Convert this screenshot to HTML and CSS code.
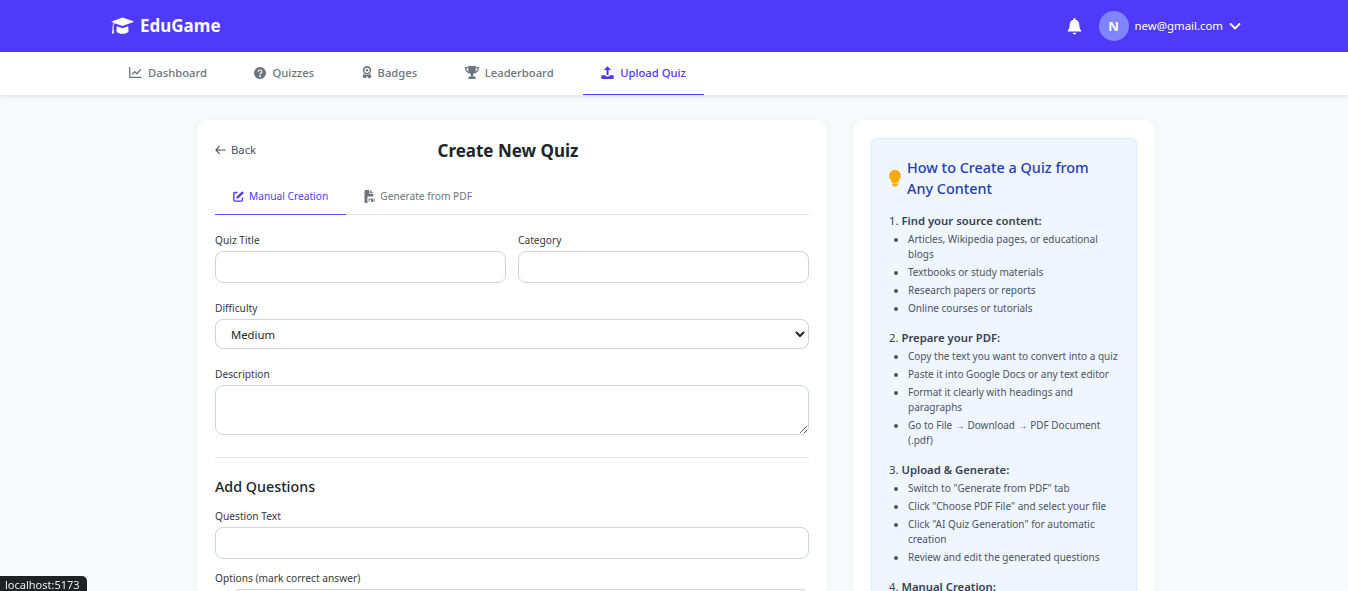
FILE: index.html
```html
<!DOCTYPE html>
<html lang="en">
<head>
    <meta charset="UTF-8">
    <meta name="viewport" content="width=device-width, initial-scale=1.0">
    <title>EduGame - Create New Quiz</title>
    <link rel="stylesheet" href="styles.css">
</head>
<body>
    <header class="topbar">
        <div class="logo">
            <svg class="logo-icon" viewBox="0 0 24 19"><path d="M12 .5.500 4.800c-.3.100-.3.500 0 .6l2.300.8C2 7.400 1.700 9 1.600 10.500c-.5.300-.5 1 0 1.300L.8 17.500h2.400l-.8-5.700c.5-.3.500-1 0-1.300.1-1.500.5-3 1.400-4l8.200 3 11.500-4.300c.3-.1.300-.5 0-.6z" fill="#fff"/><path d="M6 9.700 5.600 14.500c0 1.800 2.900 3.300 6.400 3.300s6.400-1.500 6.400-3.300L18 9.700l-6 2.200z" fill="#fff"/></svg>
            <span>EduGame</span>
        </div>
        <div class="user-area">
            <svg class="bell" viewBox="0 0 14 17"><path d="M7 0c-.6 0-1 .4-1 1v.7C3.700 2.100 2.200 4.100 2.200 6.400c0 3.400-.8 4.700-1.800 6-.4.500-.1 1.200.6 1.200h12c.7 0 1-.7.600-1.200-1-1.300-1.800-2.600-1.800-6 0-2.300-1.500-4.300-3.800-4.700V1c0-.6-.4-1-1-1zM5.200 14.700c0 .9.800 1.700 1.800 1.700s1.800-.8 1.800-1.700z" fill="#fff"/></svg>
            <div class="avatar">N</div>
            <span class="email">new@gmail.com</span>
            <svg class="chevron" viewBox="0 0 12 8"><path d="M1 1.500 6 6.500l5-5" fill="none" stroke="#fff" stroke-width="1.800"/></svg>
        </div>
    </header>

    <nav class="mainnav">
        <a class="nav-item" href="#">
            <svg class="nav-icon" viewBox="0 0 14 13"><path d="M.8.500v11.200h12.700" fill="none" stroke="currentColor" stroke-width="1.400"/><path d="M3.300 8.800 6.200 5.700l2.300 2.100 4.200-4.700" fill="none" stroke="currentColor" stroke-width="1.400"/></svg>
            Dashboard
        </a>
        <a class="nav-item" href="#">
            <svg class="nav-icon icon-q" viewBox="0 0 12 12"><circle cx="6" cy="6" r="6" fill="currentColor"/><path d="M4.100 4.800C4.100 3.600 5 3 6 3s1.900.6 1.900 1.700c0 1.400-1.900 1.300-1.900 2.700" fill="none" stroke="#fff" stroke-width="1.200"/><circle cx="6" cy="9.200" r=".9" fill="#fff"/></svg>
            Quizzes
        </a>
        <a class="nav-item" href="#">
            <svg class="nav-icon icon-b" viewBox="0 0 10 13"><circle cx="5" cy="4.300" r="3.400" fill="none" stroke="currentColor" stroke-width="1.600"/><circle cx="5" cy="4.300" r="1.200" fill="currentColor"/><path d="M1.500 7.800.6 11.300c-.1.300.2.500.4.400l1.200-.2.800 1c.2.200.5.100.6-.1L5 9.800l1.400 2.600c.1.200.4.300.6.100l.8-1 1.200.2c.2.100.5-.1.400-.4L8.500 7.800C7.600 8.600 6.300 9 5 9s-2.600-.4-3.500-1.200z" fill="currentColor"/></svg>
            Badges
        </a>
        <a class="nav-item" href="#">
            <svg class="nav-icon icon-t" viewBox="0 0 14 13"><path d="M3.200 0h7.600v4.300c0 2-1.200 3.500-2.700 4v2.200h1.700c.4 0 .7.300.7.700V13H3.500v-1.800c0-.4.300-.7.700-.7h1.700V8.300c-1.500-.5-2.700-2-2.700-4z" fill="currentColor"/><path d="M3.300 1.600H.7c0 2.600 1 4.400 3.400 5M10.700 1.600h2.600c0 2.600-1 4.400-3.400 5" fill="none" stroke="currentColor" stroke-width="1.300"/></svg>
            Leaderboard
        </a>
        <a class="nav-item active" href="#">
            <svg class="nav-icon" viewBox="0 0 13 13"><path d="M6.500.3 2.800 4h2.700v5h2V4h2.700z" fill="currentColor"/><path d="M.2 10.500c0-.8.500-1.300 1.300-1.300h2.700c.4.900 1.200 1.200 2.300 1.200s1.900-.3 2.300-1.200h2.700c.8 0 1.300.5 1.300 1.300v1.100c0 .8-.5 1.300-1.300 1.300h-10c-.8 0-1.300-.5-1.300-1.300z" fill="currentColor"/></svg>
            Upload Quiz
        </a>
    </nav>

    <main class="page">
        <section class="card quiz-card">
            <div class="card-head">
                <a class="back" href="#">
                    <svg class="back-icon" viewBox="0 0 12 10"><path d="M5 .8 1 5l4 4.200M1 5h10.500" fill="none" stroke="currentColor" stroke-width="1.200"/></svg>
                    Back
                </a>
                <h1>Create New Quiz</h1>
                <div class="head-spacer"></div>
            </div>

            <div class="tabs">
                <button class="tab active" type="button">
                    <svg class="tab-icon" viewBox="0 0 12 12"><path d="M10.300 7v2.900c0 .7-.5 1.200-1.200 1.200H2.100c-.7 0-1.200-.5-1.200-1.200V2.900c0-.7.500-1.200 1.200-1.200H5" fill="none" stroke="currentColor" stroke-width="1.500"/><path d="M10 .3 11.800 2.100 6 8 3.600 8.500 4.100 6.100z" fill="currentColor"/></svg>
                    Manual Creation
                </button>
                <button class="tab" type="button">
                    <svg class="tab-icon icon-pdf" viewBox="0 0 11 13"><path d="M.5 1.300C.5.600 1 0 1.700 0h3.600v3c0 .5.400 1 1 1h2.900v2.600H4.400c-.6 0-1 .4-1 1V13H1.700C1 13 .5 12.400.5 11.700z" fill="currentColor"/><path d="M6.100 0l3.100 3.200H6.100z" fill="currentColor"/><path d="M4.600 8.500h1.800v1.600H5.400V12h-.8zM7 8.500h1.200c.6 0 .9.500.9 1.700s-.3 1.800-.9 1.800H7zM9.600 8.500h1.400v.8h-.7v.7h.6v.7h-.6V12h-.7z" fill="currentColor"/></svg>
                    Generate from PDF
                </button>
            </div>

            <form class="quiz-form">
                <div class="form-row">
                    <div class="field">
                        <label>Quiz Title</label>
                        <input type="text">
                    </div>
                    <div class="field">
                        <label>Category</label>
                        <input type="text">
                    </div>
                </div>
                <div class="field">
                    <label>Difficulty</label>
                    <select>
                        <option>Medium</option>
                    </select>
                </div>
                <div class="field">
                    <label>Description</label>
                    <textarea></textarea>
                </div>
                <hr>
                <h2>Add Questions</h2>
                <div class="field field-tight">
                    <label>Question Text</label>
                    <input type="text">
                </div>
                <div class="field">
                    <label>Options (mark correct answer)</label>
                    <div class="option-row">
                        <input type="radio" name="correct">
                        <input type="text">
                    </div>
                </div>
            </form>
        </section>

        <aside class="card help-card">
            <div class="help-box">
                <h3>
                    <svg class="bulb" viewBox="0 0 12 17"><path d="M6 0C2.700 0 .2 2.600.2 5.700c0 3 2.300 4.400 2.800 7h6c.5-2.600 2.800-4 2.800-7C11.800 2.600 9.300 0 6 0z" fill="#f5ab00"/><path d="M3.300 13.500h5.400v1.300c0 .9-.7 1.700-1.700 1.700H5c-1 0-1.700-.8-1.700-1.700z" fill="#f5ab00"/></svg>
                    <span>How to Create a Quiz from Any Content</span>
                </h3>
                <div class="step">
                    <p>1. <strong>Find your source content:</strong></p>
                    <ul>
                        <li>Articles, Wikipedia pages, or educational blogs</li>
                        <li>Textbooks or study materials</li>
                        <li>Research papers or reports</li>
                        <li>Online courses or tutorials</li>
                    </ul>
                </div>
                <div class="step">
                    <p>2. <strong>Prepare your PDF:</strong></p>
                    <ul>
                        <li>Copy the text you want to convert into a quiz</li>
                        <li>Paste it into Google Docs or any text editor</li>
                        <li>Format it clearly with headings and paragraphs</li>
                        <li>Go to File → Download → PDF Document (.pdf)</li>
                    </ul>
                </div>
                <div class="step">
                    <p>3. <strong>Upload &amp; Generate:</strong></p>
                    <ul>
                        <li>Switch to "Generate from PDF" tab</li>
                        <li>Click "Choose PDF File" and select your file</li>
                        <li>Click "AI Quiz Generation" for automatic creation</li>
                        <li>Review and edit the generated questions</li>
                    </ul>
                </div>
                <div class="step">
                    <p>4. <strong>Manual Creation:</strong></p>
                </div>
            </div>
        </aside>
    </main>

    <div class="status-bubble">localhost:5173</div>
</body>
</html>
```

FILE: styles.css
```css
* {
    box-sizing: border-box;
}
html, body {
    height: 591px;
    overflow: hidden;
}
body {
    margin: 0;
    background-color: #f8f9fb;
    font-family: "Noto Sans", "Open Sans", Arial, sans-serif;
    color: #212529;
}
.topbar {
    height: 52px;
    background: #4f3af9;
    color: white;
    display: flex;
    align-items: center;
    justify-content: space-between;
    padding: 0 107px 0 111px;
}
.logo {
    display: flex;
    align-items: center;
    gap: 6px;
    font-size: 17px;
    font-weight: 700;
}
.logo span {
    padding-bottom: 2px;
}
.logo-icon {
    width: 23px;
    height: 18px;
}
.user-area {
    display: flex;
    align-items: center;
    font-size: 11.400px;
}
.bell {
    width: 15px;
    height: 17px;
    margin-right: 17px;
}
.avatar {
    width: 30px;
    height: 30px;
    border-radius: 50%;
    background: #8085ff;
    display: flex;
    align-items: center;
    justify-content: center;
    padding-bottom: 1px;
    font-size: 13px;
    font-weight: 700;
    margin-right: 6px;
}
.email {
    margin-right: 6px;
    padding-bottom: 1px;
}
.chevron {
    width: 12px;
    height: 8px;
}
.mainnav {
    height: 43px;
    background: white;
    box-shadow: 0 1px 4px rgba(0, 0, 0, 0.12);
    display: flex;
    gap: 11.500px;
    padding-left: 111px;
    position: relative;
}
.nav-item {
    display: flex;
    align-items: center;
    gap: 6px;
    padding: 0 18px 1px;
    font-size: 11.250px;
    font-weight: 500;
    color: #6c757d;
    text-decoration: none;
    border-bottom: 1px solid transparent;
}
.nav-item.active {
    color: #4f3af9;
    border-bottom-color: #4f3af9;
}
.nav-icon {
    width: 13px;
    height: 13px;
}
.icon-q {
    width: 12px;
    height: 12px;
}
.icon-b {
    width: 10px;
}
.icon-t {
    width: 14px;
}
.page {
    display: flex;
    align-items: flex-start;
    gap: 26px;
    padding: 25px 0 0 197px;
}
.card {
    background: white;
    border-radius: 10px;
    box-shadow: 0 1px 6px rgba(0, 0, 0, 0.05);
    padding: 18px;
}
.quiz-card {
    width: 630px;
    height: 600px;
}
.help-card {
    width: 302px;
    height: 600px;
}
.card-head {
    display: flex;
    align-items: center;
    justify-content: space-between;
    height: 24px;
    margin-bottom: 20px;
}
.back {
    width: 42px;
    display: flex;
    align-items: center;
    gap: 5px;
    padding-bottom: 1px;
    font-size: 11.300px;
    color: #495057;
    text-decoration: none;
    white-space: nowrap;
}
.back-icon {
    width: 11px;
    height: 10px;
}
.head-spacer {
    width: 50px;
}
h1 {
    margin: 0;
    font-size: 17px;
    font-weight: 700;
    color: #212529;
}
.tabs {
    display: flex;
    border-bottom: 1px solid #dee2e6;
    margin-bottom: 18px;
}
.tab {
    display: flex;
    align-items: center;
    gap: 5px;
    height: 33px;
    margin-bottom: -1px;
    padding: 0 18px 4px;
    background: none;
    border: none;
    border-bottom: 1px solid transparent;
    font-family: inherit;
    font-size: 10.200px;
    color: #6c757d;
}
.tab.active {
    color: #4f3af9;
    border-bottom-color: #5a50ff;
}
.tab-icon {
    width: 11px;
    height: 11px;
}
.icon-pdf {
    width: 11px;
    height: 13px;
}
.form-row {
    display: flex;
    gap: 12px;
}
.form-row .field {
    flex: 1;
}
.field {
    margin-bottom: 18px;
}
.field-tight {
    margin-bottom: 12px;
}
label {
    display: block;
    font-size: 10.200px;
    line-height: 14px;
    margin-bottom: 4px;
    color: #343a40;
}
input[type="text"], select, textarea {
    display: block;
    width: 100%;
    height: 32px;
    border: 1px solid #ced4da;
    border-radius: 8px;
    background: white;
    font-family: inherit;
}
select {
    height: 30px;
    padding-left: 11px;
    font-size: 11.300px;
    color: #212529;
}
textarea {
    height: 50px;
}
hr {
    border: none;
    border-top: 1px solid #e4e6ea;
    margin: 22px 0 19px;
}
h2 {
    margin: 0 0 12px;
    font-size: 14.300px;
    font-weight: 500;
    line-height: 20px;
    color: #212529;
}
.option-row {
    display: flex;
    align-items: center;
    gap: 4px;
}
.option-row input[type="radio"] {
    margin: 0;
    width: 13px;
    height: 13px;
    flex: none;
}
.help-box {
    background: #eff6ff;
    border: 1px solid #dbeafe;
    border-radius: 6px;
    padding: 18px 17px;
    height: 560px;
    font-size: 10px;
    color: #4b5563;
}
h3 {
    display: flex;
    align-items: center;
    gap: 6px;
    margin: 0 0 14px;
    padding-right: 20px;
    font-size: 14.400px;
    font-weight: 500;
    line-height: 21px;
    color: #1e40af;
}
.bulb {
    flex: none;
    width: 12px;
    height: 17px;
}
.step {
    margin-bottom: 14px;
}
.step p {
    margin: 0 0 3px;
    font-size: 11.300px;
    line-height: 16px;
    color: #374151;
}
.step strong {
    font-weight: 600;
}
ul {
    margin: 0;
    padding-left: 19px;
}
li {
    line-height: 15px;
    margin-bottom: 3px;
}
.status-bubble {
    position: fixed;
    left: 0;
    bottom: 0;
    height: 15px;
    padding: 0 7px 0 5px;
    background: #202124;
    border-top-right-radius: 5px;
    font-size: 11px;
    line-height: 17px;
    color: #e8eaed;
}
```
